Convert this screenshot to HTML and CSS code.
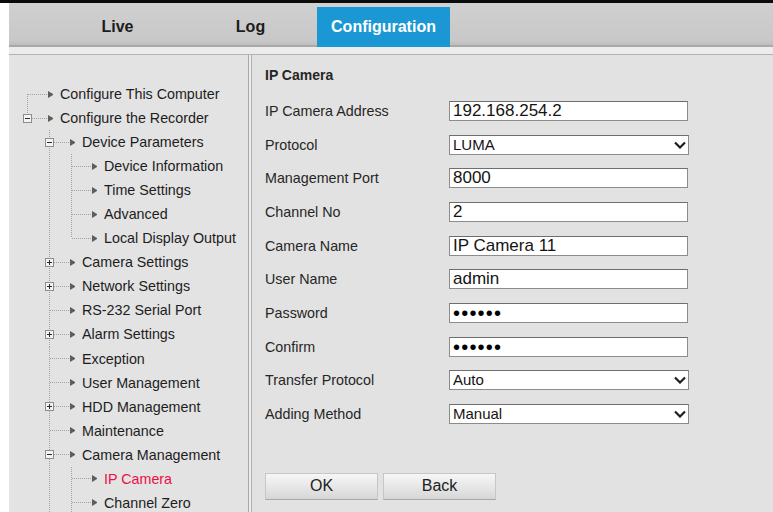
FILE: index.html
```html
<!DOCTYPE html>
<html lang="en">
<head>
<meta charset="utf-8">
<title>Configuration</title>
<link rel="stylesheet" href="styles.css">
</head>
<body>
<div class="topline"></div>
<div class="shell">
  <nav class="tabs">
    <a class="tab">Live</a>
    <a class="tab">Log</a>
    <a class="tab active">Configuration</a>
  </nav>
  <div class="tabs-rule"></div>

  <div class="main">
    <aside class="tree">
      <div class="node l0"><span class="twig first"></span><span class="arr"></span><span class="label">Configure This Computer</span></div>
      <div class="node l0"><span class="twig last"><i class="box minus"></i></span><span class="arr"></span><span class="label">Configure the Recorder</span></div>

      <div class="node l1"><span class="guide"></span><span class="twig full"><i class="box minus"></i></span><span class="arr"></span><span class="label">Device Parameters</span></div>
      <div class="node l2"><span class="guide"></span><span class="guide on"></span><span class="twig full"></span><span class="arr"></span><span class="label">Device Information</span></div>
      <div class="node l2"><span class="guide"></span><span class="guide on"></span><span class="twig full"></span><span class="arr"></span><span class="label">Time Settings</span></div>
      <div class="node l2"><span class="guide"></span><span class="guide on"></span><span class="twig full"></span><span class="arr"></span><span class="label">Advanced</span></div>
      <div class="node l2"><span class="guide"></span><span class="guide on"></span><span class="twig last"></span><span class="arr"></span><span class="label">Local Display Output</span></div>

      <div class="node l1"><span class="guide"></span><span class="twig full"><i class="box plus"></i></span><span class="arr"></span><span class="label">Camera Settings</span></div>
      <div class="node l1"><span class="guide"></span><span class="twig full"><i class="box plus"></i></span><span class="arr"></span><span class="label">Network Settings</span></div>
      <div class="node l1"><span class="guide"></span><span class="twig full"></span><span class="arr"></span><span class="label">RS-232 Serial Port</span></div>
      <div class="node l1"><span class="guide"></span><span class="twig full"><i class="box plus"></i></span><span class="arr"></span><span class="label">Alarm Settings</span></div>
      <div class="node l1"><span class="guide"></span><span class="twig full"></span><span class="arr"></span><span class="label">Exception</span></div>
      <div class="node l1"><span class="guide"></span><span class="twig full"></span><span class="arr"></span><span class="label">User Management</span></div>
      <div class="node l1"><span class="guide"></span><span class="twig full"><i class="box plus"></i></span><span class="arr"></span><span class="label">HDD Management</span></div>
      <div class="node l1"><span class="guide"></span><span class="twig full"></span><span class="arr"></span><span class="label">Maintenance</span></div>
      <div class="node l1"><span class="guide"></span><span class="twig full"><i class="box minus"></i></span><span class="arr"></span><span class="label">Camera Management</span></div>
      <div class="node l2"><span class="guide"></span><span class="guide on"></span><span class="twig full"></span><span class="arr"></span><span class="label current">IP Camera</span></div>
      <div class="node l2"><span class="guide"></span><span class="guide on"></span><span class="twig full"></span><span class="arr"></span><span class="label">Channel Zero</span></div>
    </aside>

    <section class="form">
      <h2 class="form-title">IP Camera</h2>
      <div class="fields">
        <div class="row"><span class="lbl">IP Camera Address</span><div class="field">192.168.254.2</div></div>
        <div class="row"><span class="lbl">Protocol</span><div class="field select"><span>LUMA</span><svg class="chev" viewBox="0 0 12 8" width="12" height="8"><path d="M1 1.5 6 6.5 11 1.5" fill="none" stroke="#1e1e1e" stroke-width="2.2"/></svg></div></div>
        <div class="row"><span class="lbl">Management Port</span><div class="field">8000</div></div>
        <div class="row"><span class="lbl">Channel No</span><div class="field">2</div></div>
        <div class="row"><span class="lbl">Camera Name</span><div class="field">IP Camera 11</div></div>
        <div class="row"><span class="lbl">User Name</span><div class="field">admin</div></div>
        <div class="row"><span class="lbl">Password</span><div class="field secret">••••••</div></div>
        <div class="row"><span class="lbl">Confirm</span><div class="field secret">••••••</div></div>
        <div class="row"><span class="lbl">Transfer Protocol</span><div class="field select"><span>Auto</span><svg class="chev" viewBox="0 0 12 8" width="12" height="8"><path d="M1 1.5 6 6.5 11 1.5" fill="none" stroke="#1e1e1e" stroke-width="2.2"/></svg></div></div>
        <div class="row"><span class="lbl">Adding Method</span><div class="field select"><span>Manual</span><svg class="chev" viewBox="0 0 12 8" width="12" height="8"><path d="M1 1.5 6 6.5 11 1.5" fill="none" stroke="#1e1e1e" stroke-width="2.2"/></svg></div></div>
      </div>
      <div class="actions">
        <button class="btn">OK</button>
        <button class="btn">Back</button>
      </div>
    </section>
  </div>
</div>
</body>
</html>
```

FILE: styles.css
```css
* { box-sizing: border-box; }

html, body {
  margin: 0;
  height: 512px;
  overflow: hidden;
  background: #ffffff;
  font-family: "Liberation Sans", Arial, sans-serif;
  color: #222;
}

.topline {
  height: 3px;
  background: #0b0b0b;
}

.shell {
  margin-left: 9px;
  height: 509px;
  display: flex;
  flex-direction: column;
}

/* ---- tab bar ---- */
.tabs {
  flex: none;
  height: 44px;
  display: flex;
  align-items: flex-end;
  padding-left: 42px;
  background: linear-gradient(#d0d0d0, #c8c8c8 85%, #b9b9b9);
  box-shadow: inset 0 -2px 0 #a9a9a9;
}

.tab {
  width: 133px;
  height: 40px;
  display: flex;
  align-items: center;
  justify-content: center;
  padding-bottom: 1px;
  font-size: 16px;
  font-weight: bold;
  color: #1c1c1c;
}

.tab.active {
  background: #1b98d4;
  color: #ffffff;
}

.tabs-rule {
  flex: none;
  height: 8px;
  background: #ececec;
  border-bottom: 1px solid #b2b2b2;
}

/* ---- body ---- */
.main {
  flex: 1;
  display: flex;
  background: #ededed;
}

.tree {
  width: 240px;
  background: #e3e3e3;
  border-right: 1px solid #a9a9a9;
  padding: 27px 0 0 12px;
}

.node {
  height: 24.05px;
  display: flex;
  align-items: center;
  font-size: 14.3px;
  white-space: nowrap;
}

.node .guide {
  width: 22px;
  height: 100%;
  flex: none;
}

.node .guide.on {
  background: repeating-linear-gradient(to bottom, #a3a3a3 0 1px, transparent 1px 2px) 6px 0 / 1px 100% no-repeat;
}

.twig {
  width: 27px;
  height: 100%;
  flex: none;
  display: flex;
  align-items: center;
  background:
    repeating-linear-gradient(to right, #a3a3a3 0 1px, transparent 1px 2px) 7px 50% / 20px 1px no-repeat;
}

.twig.full {
  background:
    repeating-linear-gradient(to right, #a3a3a3 0 1px, transparent 1px 2px) 7px 50% / 20px 1px no-repeat,
    repeating-linear-gradient(to bottom, #a3a3a3 0 1px, transparent 1px 2px) 6px 0 / 1px 100% no-repeat;
}

.twig.last {
  background:
    repeating-linear-gradient(to right, #a3a3a3 0 1px, transparent 1px 2px) 7px 50% / 20px 1px no-repeat,
    repeating-linear-gradient(to bottom, #a3a3a3 0 1px, transparent 1px 2px) 6px 0 / 1px 50% no-repeat;
}

.twig.first {
  background:
    repeating-linear-gradient(to right, #a3a3a3 0 1px, transparent 1px 2px) 7px 50% / 20px 1px no-repeat,
    repeating-linear-gradient(to bottom, #a3a3a3 0 1px, transparent 1px 2px) 6px 100% / 1px 50% no-repeat;
}

.box {
  width: 9px;
  height: 9px;
  margin-left: 2px;
  border: 1px solid #8d8d8d;
  background-color: #f3f3f3;
}

.box.minus {
  background: linear-gradient(#2a2a2a, #2a2a2a) center / 5px 1px no-repeat, #f3f3f3;
}

.box.plus {
  background:
    linear-gradient(#2a2a2a, #2a2a2a) center / 5px 1px no-repeat,
    linear-gradient(#2a2a2a, #2a2a2a) center / 1px 5px no-repeat,
    #f3f3f3;
}

.arr {
  width: 0;
  height: 7px;
  flex: none;
  border-left: 5px solid #5d5d5d;
  border-top: 3.5px solid transparent;
  border-bottom: 3.5px solid transparent;
  margin-right: 7px;
}

.label {
  color: #1d1d1d;
}

.label.current {
  color: #ec0f45;
}

/* ---- form ---- */
.form {
  flex: 1;
  margin-left: 2px;
  background: #e2e2e2;
  border-left: 1px solid #b0b0b0;
  padding: 11px 0 0 13px;
}

.form-title {
  margin: 0 0 10px;
  height: 18px;
  line-height: 18px;
  font-size: 14px;
  font-weight: bold;
  color: #262626;
}

.row {
  height: 33.7px;
  display: flex;
  align-items: center;
}

.lbl {
  width: 184px;
  flex: none;
  font-size: 14.3px;
  color: #262626;
}

.field {
  width: 239px;
  height: 20px;
  border: 1px solid #8c8c8c;
  border-top-color: #6e6e6e;
  background: #ffffff;
  padding-left: 3px;
  font-size: 17px;
  line-height: 18px;
  color: #141414;
  display: flex;
  align-items: center;
  white-space: nowrap;
}

.field.select {
  width: 240px;
  font-size: 15px;
  justify-content: space-between;
  padding-right: 2px;
}

.field.secret {
  font-size: 20px;
  line-height: 18px;
  letter-spacing: 1.2px;
  color: #000;
}

.chev {
  flex: none;
}

.actions {
  margin-top: 42px;
  display: flex;
  gap: 5px;
}

.btn {
  width: 113px;
  height: 27px;
  border: 1px solid #c6c6c6;
  border-bottom-color: #a8a8a8;
  background: linear-gradient(#f6f6f6, #e4e4e4 60%, #d6d6d6);
  font-family: "Liberation Sans", Arial, sans-serif;
  font-size: 16px;
  color: #222;
  padding: 0;
}
```
